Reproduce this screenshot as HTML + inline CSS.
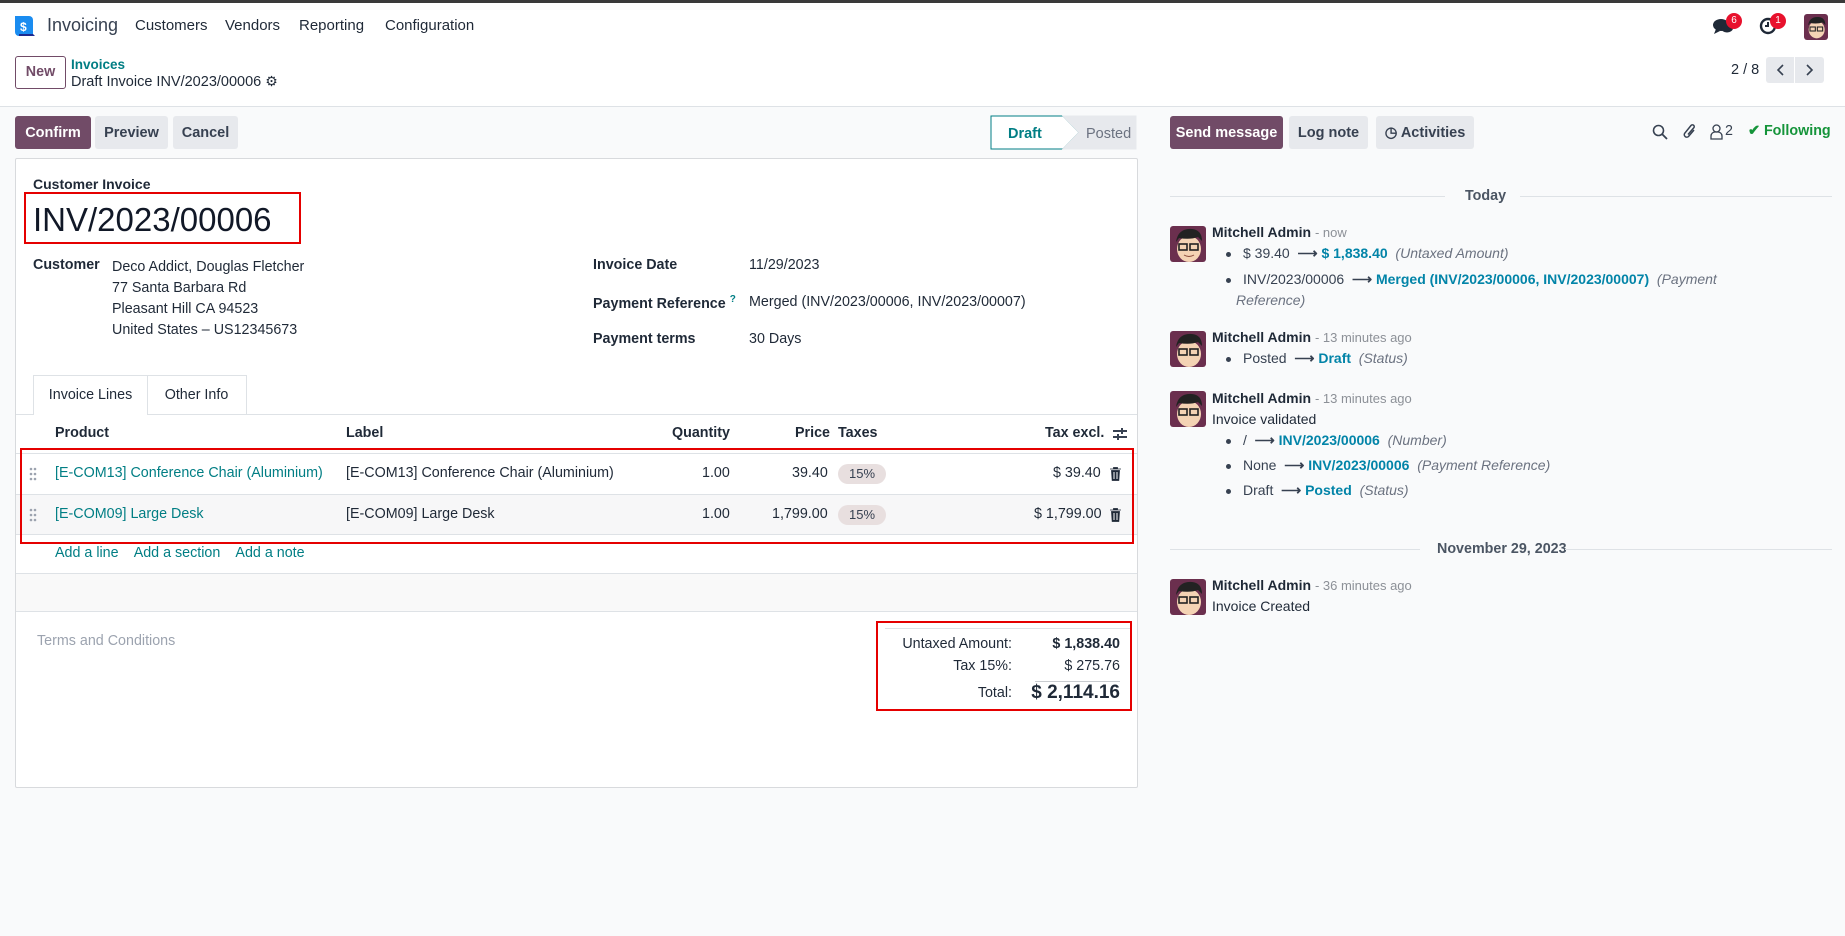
<!DOCTYPE html>
<html><head><meta charset="utf-8"><style>
*{box-sizing:border-box;margin:0;padding:0}
body{width:1845px;height:936px;overflow:hidden;font-family:"Liberation Sans",sans-serif;font-size:14.3px;color:#374151;background:#f9fafb;position:relative}
.a{position:absolute;white-space:nowrap}
.btn{position:absolute;height:33px;border-radius:3px;display:flex;align-items:center;justify-content:center;font-weight:bold;font-size:14.5px;background:#e7e9ed;color:#374151}
.pri{background:#714b67;color:#fff}
.teal{color:#017e84}
.lk{color:#0284a8;font-weight:bold}
.it{font-style:italic;color:#6b7280}
.gr{color:#8c9097}
.b{font-weight:bold;color:#1f2937}
.av{position:absolute;width:36px;height:36px;border-radius:3px;background:#6b2f4e;overflow:hidden}
.dot{display:inline-block;width:5px;height:5px;border-radius:50%;background:#374151;margin-right:12px;vertical-align:middle}
.tag{position:absolute;background:#e8dfdf;border-radius:10px;width:48px;height:20px;text-align:center;font-size:13px;line-height:20px;color:#374151}
.ch{font-size:14px}
</style></head><body>
<div class="a" style="left:0;top:0;width:1845px;height:3px;background:#3a3a3a"></div>
<div class="a" style="left:0;top:3px;width:1845px;height:104px;background:#fff;border-bottom:1px solid #dee2e6"></div>
<svg class="a" style="left:14px;top:14px" width="22" height="24" viewBox="0 0 22 24"><path d="M1 2h14a4 4 0 0 1 4 4v16H5a4 4 0 0 1-4-4z" fill="#1a8cf0"/><path d="M5 22h16l-2-2H5z" fill="#1d2a8f"/><text x="6" y="17" font-size="12" font-weight="bold" fill="#fff" font-family="Liberation Sans">$</text></svg>
<div class="a" style="left:47px;top:15px;font-size:18px;color:#374151">Invoicing</div>
<div class="a" style="left:135px;top:17px;font-size:15px;color:#1f2937">Customers</div>
<div class="a" style="left:225px;top:17px;font-size:15px;color:#1f2937">Vendors</div>
<div class="a" style="left:299px;top:17px;font-size:15px;color:#1f2937">Reporting</div>
<div class="a" style="left:385px;top:17px;font-size:15px;color:#1f2937">Configuration</div>
<svg class="a" style="left:1712px;top:17px" width="22" height="20" viewBox="0 0 22 20"><ellipse cx="9" cy="8" rx="8" ry="6" fill="#1f2937"/><path d="M4 12l-2 5 6-3z" fill="#1f2937"/><ellipse cx="15" cy="11" rx="6" ry="4.5" fill="#1f2937"/></svg>
<div class="a" style="left:1726px;top:13px;width:16px;height:16px;border-radius:8px;background:#e8112d;color:#fff;font-size:10px;text-align:center;line-height:16px">6</div>
<svg class="a" style="left:1759px;top:17px" width="18" height="18" viewBox="0 0 18 18"><circle cx="9" cy="9" r="7" fill="none" stroke="#1f2937" stroke-width="2.4"/><path d="M9 5v4h-3" stroke="#1f2937" stroke-width="2" fill="none"/></svg>
<div class="a" style="left:1770px;top:13px;width:16px;height:16px;border-radius:8px;background:#e8112d;color:#fff;font-size:10px;text-align:center;line-height:16px">1</div>
<div class="av" style="left:1804px;top:14px;width:24px;height:26px"><svg width="24" height="26" viewBox="0 0 36 36"><ellipse cx="19" cy="22" rx="12" ry="13" fill="#f4d3b4"/><path d="M6 16q2-14 16-13 10 1 10 12l-4-4q-8 3-19 1z" fill="#222"/><rect x="9" y="18" width="8" height="6" fill="none" stroke="#222" stroke-width="1.6"/><rect x="20" y="18" width="8" height="6" fill="none" stroke="#222" stroke-width="1.6"/></svg></div>
<div class="a" style="left:15px;top:56px;width:51px;height:33px;border:1px solid #714b67;border-radius:3px;color:#714b67;font-weight:bold;text-align:center;line-height:31px">New</div>
<div class="a teal" style="left:71px;top:57px;font-weight:bold;font-size:13.5px">Invoices</div>
<div class="a" style="left:71px;top:73px;font-size:14.5px;color:#1f2937">Draft Invoice INV/2023/00006 <span style="font-size:14px">⚙</span></div>
<div class="a" style="left:1731px;top:62px;font-size:14.5px;color:#1f2937">2 / 8</div>
<div class="a" style="left:1766px;top:57px;width:58px;height:26px;background:#e7e9ed;border-radius:3px"></div>
<div class="a" style="left:1794px;top:57px;width:1px;height:26px;background:#fff"></div>
<svg class="a" style="left:1766px;top:57px" width="58" height="26"><path d="M17 8l-5 5 5 5M41 8l5 5-5 5" fill="none" stroke="#374151" stroke-width="1.6"/></svg>
<div class="btn pri" style="left:15px;top:116px;width:76px">Confirm</div>
<div class="btn" style="left:95px;top:116px;width:73px">Preview</div>
<div class="btn" style="left:173px;top:116px;width:65px">Cancel</div>
<svg class="a" style="left:990px;top:115px" width="148" height="35"><path d="M1 1H73L89 17.5 73 34H1z" fill="#fff" stroke="#017e84"/><path d="M73 1H146V34H73L89 17.5z" fill="#e7e9ed" stroke="#e7e9ed"/><text x="18" y="23" font-size="14.5" font-weight="bold" fill="#017e84" font-family="Liberation Sans">Draft</text><text x="96" y="23" font-size="14.5" fill="#6b7280" font-family="Liberation Sans">Posted</text></svg>
<div class="a" style="left:15px;top:158px;width:1123px;height:630px;background:#fff;border:1px solid #d8dadd;border-radius:2px"></div>
<div class="a b" style="left:33px;top:176px;font-size:14px">Customer Invoice</div>
<div class="a" style="left:33px;top:201px;font-size:33px;color:#111827">INV/2023/00006</div>
<div class="a" style="left:24px;top:192px;width:277px;height:52px;border:2px solid #e50000"></div>
<div class="a b" style="left:33px;top:257px">Customer</div>
<div class="a" style="left:112px;top:257px;line-height:21px;color:#1f2937">Deco Addict, Douglas Fletcher<br>77 Santa Barbara Rd<br>Pleasant Hill CA 94523<br>United States – US12345673</div>
<div class="a b" style="left:593px;top:257px">Invoice Date</div>
<div class="a" style="left:749px;top:257px;color:#1f2937">11/29/2023</div>
<div class="a b" style="left:593px;top:294px">Payment Reference <sup class="teal" style="font-size:10px">?</sup></div>
<div class="a" style="left:749px;top:294px;color:#1f2937">Merged (INV/2023/00006, INV/2023/00007)</div>
<div class="a b" style="left:593px;top:331px">Payment terms</div>
<div class="a" style="left:749px;top:331px;color:#1f2937">30 Days</div>
<div class="a" style="left:16px;top:414px;width:1121px;height:1px;background:#dee2e6"></div>
<div class="a" style="left:33px;top:375px;width:115px;height:40px;background:#fff;border:1px solid #dee2e6;border-bottom:none;text-align:center;line-height:38px;color:#1f2937">Invoice Lines</div>
<div class="a" style="left:147px;top:375px;width:100px;height:40px;border:1px solid #dee2e6;border-bottom:none;border-left:none;text-align:center;line-height:38px;color:#1f2937">Other Info</div>
<div class="a b" style="left:55px;top:425px">Product</div>
<div class="a b" style="left:346px;top:425px">Label</div>
<div class="a b" style="left:672px;top:425px">Quantity</div>
<div class="a b" style="left:795px;top:425px">Price</div>
<div class="a b" style="left:838px;top:425px">Taxes</div>
<div class="a b" style="left:1045px;top:425px">Tax excl.</div>
<svg class="a" style="left:1112px;top:426px" width="16" height="16"><path d="M1 5h14M1 11h14" stroke="#374151" stroke-width="2"/><path d="M10 2v6M6 8v6" stroke="#374151" stroke-width="2"/></svg>
<div class="a" style="left:16px;top:453px;width:1121px;height:1px;background:#dee2e6"></div>
<div class="a" style="left:16px;top:494px;width:1121px;height:41px;background:#f7f7f8;border-top:1px solid #dee2e6;border-bottom:1px solid #dee2e6"></div>
<svg class="a" style="left:29px;top:467px" width="8" height="14"><g fill="#9ca3af"><circle cx="2" cy="2" r="1.3"/><circle cx="6" cy="2" r="1.3"/><circle cx="2" cy="7" r="1.3"/><circle cx="6" cy="7" r="1.3"/><circle cx="2" cy="12" r="1.3"/><circle cx="6" cy="12" r="1.3"/></g></svg>
<div class="a teal" style="left:55px;top:465px">[E-COM13] Conference Chair (Aluminium)</div>
<div class="a" style="left:346px;top:465px;color:#1f2937">[E-COM13] Conference Chair (Aluminium)</div>
<div class="a" style="left:702px;top:465px;color:#1f2937">1.00</div>
<div class="a" style="left:792px;top:465px;color:#1f2937">39.40</div>
<div class="tag" style="left:838px;top:464px">15%</div>
<div class="a" style="left:1053px;top:465px;color:#1f2937">$ 39.40</div>
<svg class="a" style="left:1110px;top:467px" width="11" height="14"><path d="M0 2h11M3.5 2V0.5h4V2M1.5 3.5h8l-.7 10h-6.6z" fill="#1f2937" stroke="#1f2937" stroke-width=".8"/><path d="M4 5v7M7 5v7" stroke="#fff"/></svg>
<svg class="a" style="left:29px;top:508px" width="8" height="14"><g fill="#9ca3af"><circle cx="2" cy="2" r="1.3"/><circle cx="6" cy="2" r="1.3"/><circle cx="2" cy="7" r="1.3"/><circle cx="6" cy="7" r="1.3"/><circle cx="2" cy="12" r="1.3"/><circle cx="6" cy="12" r="1.3"/></g></svg>
<div class="a teal" style="left:55px;top:506px">[E-COM09] Large Desk</div>
<div class="a" style="left:346px;top:506px;color:#1f2937">[E-COM09] Large Desk</div>
<div class="a" style="left:702px;top:506px;color:#1f2937">1.00</div>
<div class="a" style="left:772px;top:506px;color:#1f2937">1,799.00</div>
<div class="tag" style="left:838px;top:505px">15%</div>
<div class="a" style="left:1034px;top:506px;color:#1f2937">$ 1,799.00</div>
<svg class="a" style="left:1110px;top:508px" width="11" height="14"><path d="M0 2h11M3.5 2V0.5h4V2M1.5 3.5h8l-.7 10h-6.6z" fill="#1f2937" stroke="#1f2937" stroke-width=".8"/><path d="M4 5v7M7 5v7" stroke="#fff"/></svg>
<div class="a" style="left:20px;top:448px;width:1114px;height:96px;border:2px solid #e50000"></div>
<div class="a teal" style="left:55px;top:545px">Add a line &nbsp;&nbsp; Add a section &nbsp;&nbsp; Add a note</div>
<div class="a" style="left:16px;top:573px;width:1121px;height:39px;background:#f9f9f9;border-top:1px solid #dee2e6;border-bottom:1px solid #dee2e6"></div>
<div class="a" style="left:37px;top:633px;color:#9ca3af">Terms and Conditions</div>
<div class="a" style="left:876px;top:621px;width:256px;height:90px;border:2px solid #e50000"></div>
<div class="a" style="left:885px;top:628px;width:245px;height:1px;background:#dee2e6"></div>
<div class="a" style="left:900px;top:636px;width:112px;text-align:right;color:#1f2937">Untaxed Amount:</div>
<div class="a b" style="left:1020px;top:636px;width:100px;text-align:right">$ 1,838.40</div>
<div class="a" style="left:900px;top:658px;width:112px;text-align:right;color:#1f2937">Tax 15%:</div>
<div class="a" style="left:1020px;top:658px;width:100px;text-align:right;color:#1f2937">$ 275.76</div>
<div class="a" style="left:1035px;top:681px;width:85px;height:1px;background:#c9ccd0"></div>
<div class="a" style="left:900px;top:685px;width:112px;text-align:right;color:#1f2937">Total:</div>
<div class="a b" style="left:1000px;top:682px;width:120px;text-align:right;font-size:19px">$ 2,114.16</div>
<div class="btn pri" style="left:1170px;top:116px;width:113px">Send message</div>
<div class="btn" style="left:1289px;top:116px;width:79px">Log note</div>
<div class="btn" style="left:1376px;top:116px;width:98px">◷ Activities</div>
<svg class="a" style="left:1652px;top:124px" width="16" height="16"><circle cx="6.5" cy="6.5" r="5" fill="none" stroke="#374151" stroke-width="1.6"/><path d="M10 10l5 5" stroke="#374151" stroke-width="1.8"/></svg>
<svg class="a" style="left:1683px;top:122px" width="14" height="19"><path d="M11 8l-5.5 6.5a2.5 2.5 0 0 1-3.8-3.2L8 3.5a1.8 1.8 0 0 1 2.8 2.3L5 12.5" fill="none" stroke="#374151" stroke-width="1.5"/></svg>
<svg class="a" style="left:1710px;top:124px" width="13" height="16"><circle cx="6.5" cy="4.5" r="3.5" fill="none" stroke="#374151" stroke-width="1.3"/><path d="M1 15v-3a4 4 0 0 1 4-4h3a4 4 0 0 1 4 4v3z" fill="none" stroke="#374151" stroke-width="1.3"/></svg>
<div class="a" style="left:1725px;top:123px">2</div>
<div class="a" style="left:1748px;top:123px;color:#15943a;font-weight:bold">✔ Following</div>
<div class="a" style="left:1170px;top:196px;width:275px;height:1px;background:#dee2e6"></div>
<div class="a b" style="left:1465px;top:188px;color:#4b5563">Today</div>
<div class="a" style="left:1520px;top:196px;width:312px;height:1px;background:#dee2e6"></div>

<div class="av" style="left:1170px;top:226px"><svg width="36" height="36" viewBox="0 0 36 36"><ellipse cx="19" cy="23" rx="12" ry="13" fill="#f4d3b4"/><path d="M6 16q2-14 16-13 10 1 10 12l-4-4q-8 3-19 1z" fill="#222"/><rect x="9" y="18" width="8" height="6" fill="none" stroke="#222" stroke-width="1.6"/><rect x="20" y="18" width="8" height="6" fill="none" stroke="#222" stroke-width="1.6"/><path d="M14 29q5 3 10 0" stroke="#8a4a3a" fill="none"/></svg></div>
<div class="a ch" style="left:1212px;top:224px"><span class="b">Mitchell Admin</span> <span class="gr" style="font-size:13px">- now</span></div>
<div class="a ch" style="left:1226px;top:245px"><span class="dot"></span>$ 39.40 &nbsp;<b>⟶</b> <span class="lk">$ 1,838.40</span> &nbsp;<span class="it">(Untaxed Amount)</span></div>
<div class="a ch" style="left:1226px;top:271px"><span class="dot"></span>INV/2023/00006 &nbsp;<b>⟶</b> <span class="lk">Merged (INV/2023/00006, INV/2023/00007)</span> &nbsp;<span class="it">(Payment</span></div>
<div class="a it ch" style="left:1236px;top:292px">Reference)</div>

<div class="av" style="left:1170px;top:331px"><svg width="36" height="36" viewBox="0 0 36 36"><ellipse cx="19" cy="23" rx="12" ry="13" fill="#f4d3b4"/><path d="M6 16q2-14 16-13 10 1 10 12l-4-4q-8 3-19 1z" fill="#222"/><rect x="9" y="18" width="8" height="6" fill="none" stroke="#222" stroke-width="1.6"/><rect x="20" y="18" width="8" height="6" fill="none" stroke="#222" stroke-width="1.6"/></svg></div>
<div class="a ch" style="left:1212px;top:329px"><span class="b">Mitchell Admin</span> <span class="gr" style="font-size:13px">- 13 minutes ago</span></div>
<div class="a ch" style="left:1226px;top:350px"><span class="dot"></span>Posted &nbsp;<b>⟶</b> <span class="lk">Draft</span> &nbsp;<span class="it">(Status)</span></div>

<div class="av" style="left:1170px;top:391px"><svg width="36" height="36" viewBox="0 0 36 36"><ellipse cx="19" cy="23" rx="12" ry="13" fill="#f4d3b4"/><path d="M6 16q2-14 16-13 10 1 10 12l-4-4q-8 3-19 1z" fill="#222"/><rect x="9" y="18" width="8" height="6" fill="none" stroke="#222" stroke-width="1.6"/><rect x="20" y="18" width="8" height="6" fill="none" stroke="#222" stroke-width="1.6"/></svg></div>
<div class="a ch" style="left:1212px;top:390px"><span class="b">Mitchell Admin</span> <span class="gr" style="font-size:13px">- 13 minutes ago</span></div>
<div class="a ch" style="left:1212px;top:411px;color:#1f2937">Invoice validated</div>
<div class="a ch" style="left:1226px;top:432px"><span class="dot"></span>/ &nbsp;<b>⟶</b> <span class="lk">INV/2023/00006</span> &nbsp;<span class="it">(Number)</span></div>
<div class="a ch" style="left:1226px;top:457px"><span class="dot"></span>None &nbsp;<b>⟶</b> <span class="lk">INV/2023/00006</span> &nbsp;<span class="it">(Payment Reference)</span></div>
<div class="a ch" style="left:1226px;top:482px"><span class="dot"></span>Draft &nbsp;<b>⟶</b> <span class="lk">Posted</span> &nbsp;<span class="it">(Status)</span></div>

<div class="a" style="left:1170px;top:549px;width:250px;height:1px;background:#dee2e6"></div>
<div class="a b" style="left:1437px;top:541px;color:#4b5563">November 29, 2023</div>
<div class="a" style="left:1565px;top:549px;width:267px;height:1px;background:#dee2e6"></div>

<div class="av" style="left:1170px;top:579px"><svg width="36" height="36" viewBox="0 0 36 36"><ellipse cx="19" cy="23" rx="12" ry="13" fill="#f4d3b4"/><path d="M6 16q2-14 16-13 10 1 10 12l-4-4q-8 3-19 1z" fill="#222"/><rect x="9" y="18" width="8" height="6" fill="none" stroke="#222" stroke-width="1.6"/><rect x="20" y="18" width="8" height="6" fill="none" stroke="#222" stroke-width="1.6"/></svg></div>
<div class="a ch" style="left:1212px;top:577px"><span class="b">Mitchell Admin</span> <span class="gr" style="font-size:13px">- 36 minutes ago</span></div>
<div class="a ch" style="left:1212px;top:598px;color:#1f2937">Invoice Created</div>
</body></html>
